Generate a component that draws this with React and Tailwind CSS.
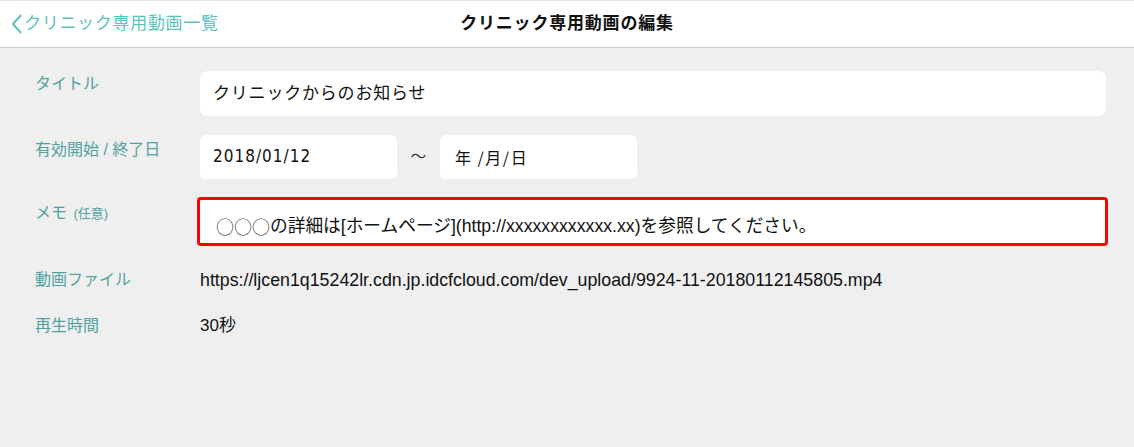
import React from "react";

const jp = { fontFamily: '"Liberation Sans", "Noto Sans CJK JP", sans-serif' };

function Row({ label, children, labelMt, className = "" }) {
  return (
    <div className={`flex ${className}`}>
      <div className={`w-[200px] shrink-0 pl-[35px] text-[16px] leading-[20px] text-[#4fa29f] ${labelMt}`}>{label}</div>
      <div className="flex-1 min-w-0">{children}</div>
    </div>
  );
}

export default function App() {
  return (
    <div className="w-[1134px] h-[447px] bg-[#efefef] overflow-hidden" style={jp}>
      <div className="relative h-[48px] bg-white border-t border-[#e8e8e8] border-b border-b-[#cdcdcd] flex items-center">
        <div className="flex items-center pl-[11px] text-[#5cc3be] text-[17px] tracking-[0.7px]">
          <svg width="12" height="20" viewBox="0 0 12 20" className="mr-[1px]">
            <path d="M10 1 L2 10 L10 19" fill="none" stroke="#5cc3be" strokeWidth="2" />
          </svg>
          <span>クリニック専用動画一覧</span>
        </div>
        <div className="absolute left-0 right-0 text-center text-[17px] font-bold text-[#111] tracking-[0.8px] pointer-events-none">
          クリニック専用動画の編集
        </div>
      </div>

      <div className="pt-[23px] pr-[28px]">
        <Row label="タイトル" labelMt="mt-[3px]">
          <div className="h-[45px] bg-white rounded-[8px] flex items-center pl-[13px] text-[17px] text-[#111] tracking-[0.8px]">
            クリニックからのお知らせ
          </div>
        </Row>

        <Row label="有効開始 / 終了日" labelMt="mt-[5px]" className="mt-[19px]">
          <div className="flex items-center">
            <div className="w-[197px] h-[44px] bg-white rounded-[6px] flex items-center pl-[13px] text-[17px] tracking-[1px] text-[#111]" style={{ fontFamily: '"DejaVu Sans Condensed", "Noto Sans CJK JP", sans-serif' }}>
              2018/01/12
            </div>
            <div className="w-[43px] text-center text-[16px] text-[#333]">〜</div>
            <div className="w-[197px] h-[44px] bg-white rounded-[6px] flex items-center pl-[15px] text-[16px] tracking-[1.5px] text-[#111]" style={{ fontFamily: '"Noto Sans CJK JP", sans-serif' }}>
              年 /月/日
            </div>
          </div>
        </Row>

        <Row label={<span>メモ <span className="text-[13px] ml-[2px]">(任意)</span></span>} labelMt="mt-[6px]" className="mt-[18px]">
          <div className="ml-[-3px] mr-[-2px] h-[49px] bg-white border-[3px] border-[#ff0000] rounded-[4px] flex items-center pl-[16px] pt-[9px] text-[17.7px] text-[#111]">
            <span style={{ fontFamily: '"Noto Sans CJK JP", sans-serif' }} className="font-light text-[#333] text-[18px]">○○○</span>
            <span>の詳細は[ホームページ](http://xxxxxxxxxxxx.xx)を参照してください。</span>
          </div>
        </Row>

        <Row label="動画ファイル" labelMt="mt-0" className="mt-[24px]">
          <div className="text-[17.8px] leading-[20px] text-[#111]">
            https://ljcen1q15242lr.cdn.jp.idcfcloud.com/dev_upload/9924-11-20180112145805.mp4
          </div>
        </Row>

        <Row label="再生時間" labelMt="mt-0" className="mt-[26px]">
          <div className="text-[17px] leading-[20px] text-[#111]">30秒</div>
        </Row>
      </div>
    </div>
  );
}
